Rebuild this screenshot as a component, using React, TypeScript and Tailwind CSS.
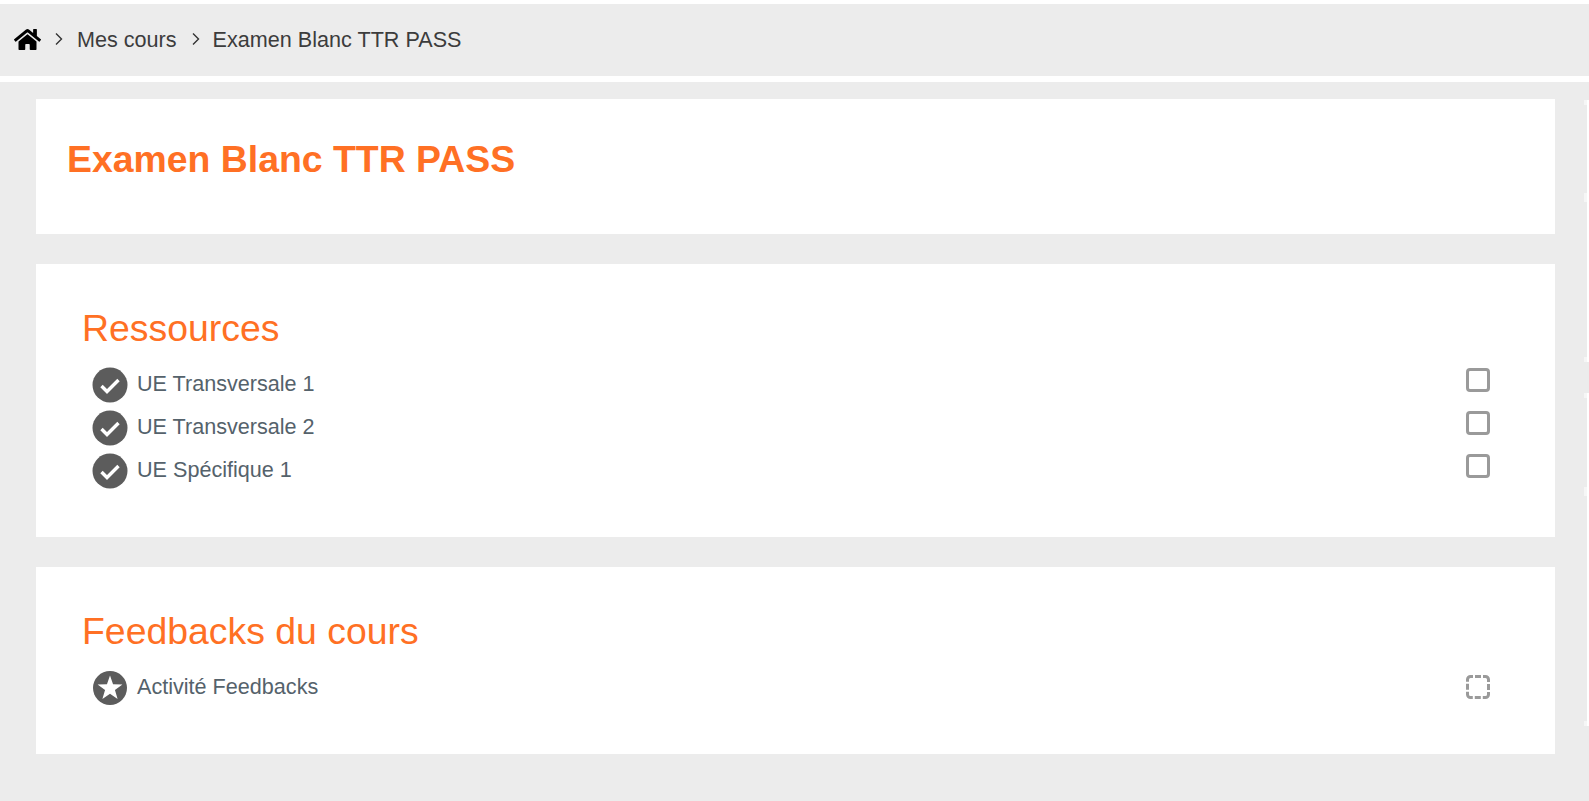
import React from 'react';
import { FaHome } from 'react-icons/fa';

const Check = () => (
  <svg viewBox="0 0 36 36" className="w-[36px] h-[36px] shrink-0">
    <circle cx="18" cy="18" r="17.5" fill="#5c5c5c" />
    <path d="M9.5 19l5.5 5.5L26.5 13" fill="none" stroke="#fff" strokeWidth="3.4" />
  </svg>
);

const Star = () => (
  <svg viewBox="0 0 36 36" className="w-[36px] h-[36px] shrink-0">
    <circle cx="18" cy="18" r="17" fill="#5c5c5c" />
    <path d="M18 5.5L21.06 14.3 30.4 14.5 22.95 20.1 25.6 29 18 23.7 10.4 29 13.05 20.1 5.6 14.5 14.94 14.3z" fill="#fff" />
  </svg>
);

const DashedBox = () => (
  <svg viewBox="0 0 24 24" className="ml-auto mt-[5px] w-[24px] h-[24px]">
    <rect
      x="1.5"
      y="1.5"
      width="21"
      height="21"
      rx="3"
      fill="none"
      stroke="#9a9a9a"
      strokeWidth="3"
      strokeDasharray="6 2 9.7 2"
      strokeDashoffset="15.2"
    />
  </svg>
);

const Row = ({ label }: { label: string }) => (
  <div className="flex items-start h-[43px] pl-[56px] pr-[65px]">
    <div className="mt-[2px] mr-[9px]">
      <Check />
    </div>
    <span className="text-[21.6px] leading-[30px] text-[#55626b] mt-[4px]">{label}</span>
    <span className="ml-auto mt-[3px] w-[24px] h-[24px] rounded-[4px] border-[3px] border-[#9a9a9a]" />
  </div>
);

const Chevron = () => (
  <svg viewBox="0 0 10 14" className="w-[10px] h-[14px] text-[#333]">
    <path d="M2 1.5L7.5 7 2 12.5" fill="none" stroke="currentColor" strokeWidth="1.4" />
  </svg>
);

// the collapsed side blocks at the right edge of the page
const SideStrip = ({ height, arrowTop }: { height: number; arrowTop: string }) => (
  <div className="relative w-[5px] border-r-2 border-white" style={{ height }}>
    <span className="absolute top-0 left-0 w-[3px] h-[5px] bg-[#f6f6f6]" />
    <span className={`absolute left-0 w-[3px] h-[9px] bg-[#f6f6f6] ${arrowTop}`} />
    <span className="absolute bottom-0 left-0 w-[3px] h-[5px] bg-[#f6f6f6]" />
  </div>
);

export default function App() {
  return (
    <div className="w-[1589px] h-[801px] overflow-hidden bg-white pt-[4px] font-['Liberation_Sans',Arial,sans-serif]">
      <div className="h-[72px] bg-[#ececec] flex items-center pl-[14px] pb-[2px] text-[21.6px] text-[#3c3c3c]">
        <FaHome className="w-[27px] h-[27px] text-black mr-[13px]" />
        <Chevron />
        <span className="ml-[13px] mt-[2px]">Mes cours</span>
        <span className="ml-[14px]">
          <Chevron />
        </span>
        <span className="ml-[12px] mt-[2px]">Examen Blanc TTR PASS</span>
      </div>
      <div className="mt-[6px] h-[719px] bg-[#ececec] pl-[36px] flex">
        <div className="w-[1519px] pt-[17px] flex flex-col gap-[30px]">
          <section className="h-[135px] bg-white pl-[31px] pt-[37px]">
            <h1 className="text-[37.4px] leading-[46px] font-bold text-[#ff7024]">Examen Blanc TTR PASS</h1>
          </section>
          <section className="h-[273px] bg-white pt-[41px]">
            <h2 className="pl-[46px] text-[37.4px] leading-[46px] text-[#ff7024] mb-[14px]">Ressources</h2>
            <Row label="UE Transversale 1" />
            <Row label="UE Transversale 2" />
            <Row label="UE Spécifique 1" />
          </section>
          <section className="h-[187px] bg-white pt-[41px]">
            <h2 className="pl-[46px] text-[37.4px] leading-[46px] text-[#ff7024] mb-[16px]">Feedbacks du cours</h2>
            <div className="flex items-start pl-[56px] pr-[65px] h-[36px]">
              <div className="mr-[9px]">
                <Star />
              </div>
              <span className="text-[21.6px] leading-[30px] text-[#55626b] mt-[2px]">Activité Feedbacks</span>
              <DashedBox />
            </div>
          </section>
        </div>
        <aside className="ml-[29px] pt-[18px] flex flex-col gap-[31px]">
          <SideStrip height={262} arrowTop="top-[93px]" />
          <SideStrip height={333} arrowTop="top-[94px]" />
        </aside>
      </div>
    </div>
  );
}
